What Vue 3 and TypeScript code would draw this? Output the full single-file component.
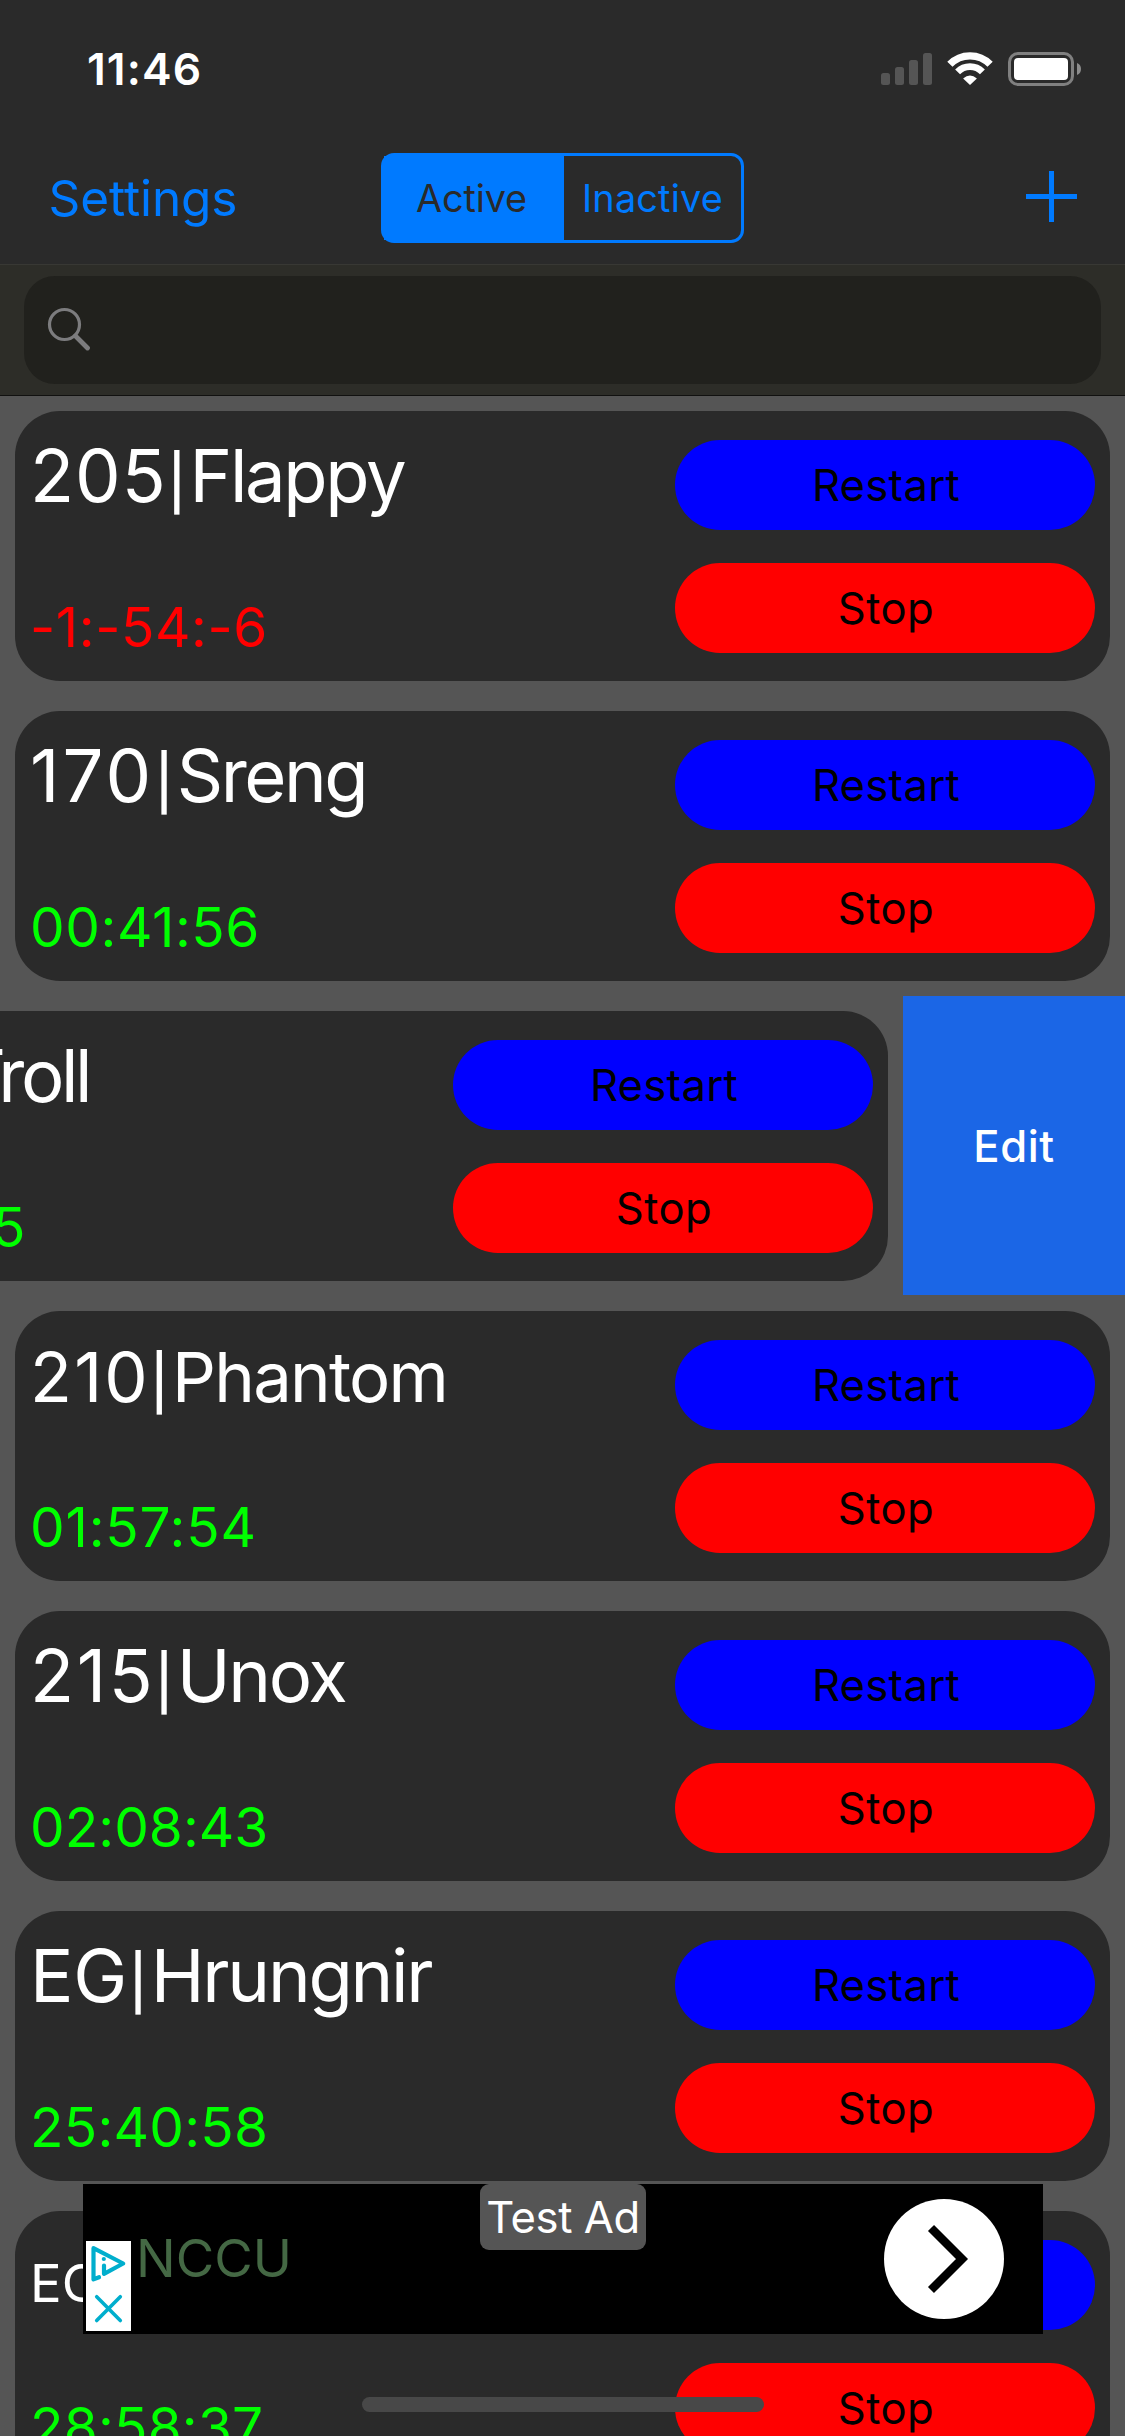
<script setup lang="ts">
interface Timer {
  code: string
  codeWidth: number
  codeSpacing: number
  name: string
  nameSpacing: number
  nameSize: number
  time: string
  timeSpacing: number
  timeIndent?: number
  expired?: boolean
  swiped?: boolean
}

const timers: Timer[] = [
  { code: '205', codeWidth: 137.5, codeSpacing: 0.94, name: 'Flappy', nameSpacing: -2.35, nameSize: 72.4, time: '-1:-54:-6', timeSpacing: 0.55, expired: true },
  { code: '170', codeWidth: 124.8, codeSpacing: 3.1, name: 'Sreng', nameSpacing: -2.5, nameSize: 72.4, time: '00:41:56', timeSpacing: 0.57 },
  { code: '', codeWidth: 129, codeSpacing: 0, name: 'Troll', nameSpacing: -3.4, nameSize: 72.4, time: '5', timeSpacing: 0, timeIndent: 184, swiped: true },
  { code: '210', codeWidth: 120, codeSpacing: 2.2, name: 'Phantom', nameSpacing: -1.74, nameSize: 68.8, time: '01:57:54', timeSpacing: 0.79 },
  { code: '215', codeWidth: 124.8, codeSpacing: 2.6, name: 'Unox', nameSpacing: -2.3, nameSize: 72.4, time: '02:08:43', timeSpacing: 0.02 },
  { code: 'EG', codeWidth: 98.8, codeSpacing: -0.24, name: 'Hrungnir', nameSpacing: -2.25, nameSize: 72.4, time: '25:40:58', timeSpacing: 0.24 },
  { code: 'EG', codeWidth: 72, codeSpacing: 0, name: '', nameSpacing: 0, nameSize: 52.7, time: '28:58:37', timeSpacing: 0.2 },
]
</script>

<template>
  <div class="screen">
    <header class="top">
      <div class="status">
        <span class="clock">11:46</span>
        <div class="status-icons">
          <svg class="signal" width="51" height="33" viewBox="0 0 51 33" fill="#555555">
            <rect x="0" y="21" width="9" height="12" rx="2.5" />
            <rect x="14" y="15" width="9" height="18" rx="2.5" />
            <rect x="28" y="8" width="9" height="25" rx="2.5" />
            <rect x="42" y="1" width="9" height="32" rx="2.5" />
          </svg>
          <svg class="wifi" width="46" height="34" viewBox="0 0 46 34" fill="none" stroke="#fff">
            <path d="M2.9 12.3A28 28 0 0 1 43.1 12.3" stroke-width="7.3" />
            <path d="M10.6 19.9A17.2 17.2 0 0 1 35.4 19.9" stroke-width="6.8" />
            <path d="M23 33L16.1 26.4Q23 20.4 29.9 26.4Z" fill="#fff" stroke="none" />
          </svg>
          <svg class="battery" width="73" height="34" viewBox="0 0 73 34">
            <rect x="1.5" y="1.5" width="63" height="31" rx="8.5" fill="none" stroke="#808080" stroke-width="3" />
            <rect x="6" y="6" width="54" height="22" rx="4" fill="#fff" />
            <path d="M69 11Q73 12.5 73 17T69 23Z" fill="#8c8c8c" />
          </svg>
        </div>
      </div>
      <nav class="nav">
        <span class="settings">Settings</span>
        <div class="segments">
          <span class="segment active">Active</span>
          <span class="segment">Inactive</span>
        </div>
        <svg class="add" width="51" height="51" viewBox="0 0 51 51" fill="#007aff">
          <rect x="23" y="0" width="5" height="51" />
          <rect x="0" y="23" width="51" height="5" />
        </svg>
      </nav>
      <div class="search">
        <div class="field">
          <svg width="44" height="44" viewBox="0 0 44 44" fill="none" stroke="#7c7c7e" stroke-linecap="round">
            <circle cx="17.5" cy="17.5" r="15" stroke-width="3.2" />
            <path d="M28.5 29L40.5 41" stroke-width="4.8" />
          </svg>
        </div>
      </div>
    </header>

    <main class="list">
      <div v-for="(t, i) in timers" :key="i" class="row" :class="{ swiped: t.swiped }">
        <section class="card">
          <div class="info">
            <div class="title">
              <span class="code" :style="{ width: t.codeWidth + 'px', fontSize: t.nameSize + 'px', letterSpacing: t.codeSpacing + 'px' }">{{ t.code }}</span>
              <span class="bar"><template v-if="t.code && t.name">|</template></span>
              <span class="name" :style="{ fontSize: t.nameSize + 'px', letterSpacing: t.nameSpacing + 'px' }">{{ t.name }}</span>
            </div>
            <div class="time" :class="{ expired: t.expired }" :style="{ textIndent: (t.timeIndent ?? 0) + 'px', letterSpacing: t.timeSpacing + 'px' }">{{ t.time }}</div>
          </div>
          <div class="actions">
            <div class="pill restart">Restart</div>
            <div class="pill stop">Stop</div>
          </div>
        </section>
        <div v-if="t.swiped" class="edit">Edit</div>
      </div>
    </main>

    <aside class="ad">
      <div class="choices">
        <svg width="45" height="90" viewBox="0 0 45 90" fill="none" stroke="#00aecd" stroke-linecap="round" stroke-linejoin="round">
          <path d="M13 36.2L7.5 38.4V7.2L37.2 22.5L18 32.8V24.5" stroke-width="4.2" />
          <circle cx="17.8" cy="18" r="2.1" fill="#00aecd" stroke="none" />
          <path d="M10.7 55.7L34.3 79.5M34.3 55.7L10.7 79.5" stroke-width="3.6" />
        </svg>
      </div>
      <span class="ad-title">NCCU</span>
      <span class="ad-label">Test Ad</span>
      <svg class="go" width="120" height="120" viewBox="0 0 120 120">
        <circle cx="60" cy="60" r="60" fill="#fff" />
        <path d="M47 29L78 60L47 91" fill="none" stroke="#000" stroke-width="8.5" />
      </svg>
    </aside>
    <div class="home"></div>
  </div>
</template>

<style>
body {
  background: #555555;
}
</style>

<style scoped>
.screen {
  position: relative;
  width: 1125px;
  height: 2436px;
  overflow: hidden;
  background: #555555;
  font-family: Inter, "Liberation Sans", sans-serif;
  white-space: nowrap;
}
.top {
  background: #2a2a2a;
}
.status {
  display: flex;
  justify-content: space-between;
  height: 132px;
  box-sizing: border-box;
  padding: 39px 44px 0 87px;
}
.clock {
  color: #fff;
  font-size: 44.4px;
  font-weight: 600;
  line-height: 60px;
  letter-spacing: 1.1px;
}
.status-icons {
  display: flex;
  align-items: flex-start;
  padding-top: 13px;
}
.wifi {
  margin: 0 15px 0 15px;
}
.nav {
  display: grid;
  grid-template-columns: 381px 363px 1fr;
  align-items: center;
  height: 132px;
  color: #007aff;
}
.settings {
  padding-left: 48.6px;
  font-size: 49.5px;
  line-height: 60px;
  letter-spacing: -0.1px;
}
.segments {
  display: flex;
  box-sizing: border-box;
  height: 90px;
  border: 3px solid #007aff;
  border-radius: 13px;
}
.segment {
  flex: 1;
  text-align: center;
  font-size: 37.8px;
  line-height: 84px;
  letter-spacing: 0.2px;
}
.segment.active {
  flex: none;
  box-sizing: border-box;
  width: 180px;
  padding-right: 5px;
  background: #007aff;
  color: #2a2a2a;
  letter-spacing: -0.1px;
}
.add {
  justify-self: end;
  margin: 0 48px 3px 0;
}
.search {
  box-sizing: border-box;
  height: 132px;
  padding: 11px 24px;
  background: #2d2d28;
  border-top: 1px solid #383834;
  border-bottom: 1px solid #111110;
}
.field {
  display: flex;
  align-items: center;
  box-sizing: border-box;
  height: 108px;
  padding: 0 0 2px 23px;
  border-radius: 31px;
  background: #21211d;
}
.row {
  display: flex;
  height: 300px;
}
.card {
  flex: none;
  display: flex;
  justify-content: space-between;
  box-sizing: border-box;
  width: 1095px;
  height: 270px;
  margin: 15px;
  padding: 0 15px 0 15px;
  border-radius: 45px;
  background: #2a2a2a;
}
.swiped .card {
  margin-left: -207px;
}
.title {
  display: flex;
  align-items: baseline;
  height: 129px;
  color: #fff;
}
/* Strut that keeps every title on one baseline, whatever its size */
.title::before {
  content: "";
  display: inline-block;
  height: 91px;
}
.title span {
  flex: none;
  line-height: 80px;
}
.title .bar {
  width: 22px;
  font-size: 54px;
  font-weight: 450;
}
.time {
  margin-top: 52px;
  color: #00ff00;
  font-size: 55px;
  line-height: 70px;
}
.time.expired {
  color: #ff0000;
}
.actions {
  display: flex;
  flex-direction: column;
  gap: 33px;
  padding-top: 29px;
}
.pill {
  box-sizing: border-box;
  width: 420px;
  height: 90px;
  padding-left: 2px;
  border-radius: 45px;
  color: #000;
  font-size: 43.6px;
  line-height: 92px;
  letter-spacing: 0.3px;
  text-align: center;
}
.restart {
  background: #0000ff;
}
.stop {
  background: #ff0000;
  letter-spacing: 0.5px;
}
.edit {
  flex: none;
  width: 222px;
  height: 299px;
  background: #1b66e6;
  color: #fff;
  font-size: 43.6px;
  font-weight: 500;
  line-height: 301px;
  letter-spacing: 0.56px;
  text-align: center;
}
.ad {
  position: absolute;
  left: 83px;
  top: 2184px;
  display: flex;
  align-items: center;
  box-sizing: border-box;
  width: 960px;
  height: 150px;
  padding: 0 39px 0 3px;
  background: #000;
}
.choices {
  align-self: flex-end;
  width: 45px;
  height: 90px;
  margin-bottom: 3px;
  background: #fff;
}
.choices svg {
  display: block;
}
.ad-title {
  margin: -2px auto 0 5px;
  color: #446844;
  font-size: 52.7px;
  letter-spacing: 0;
}
.ad-label {
  position: absolute;
  left: 397px;
  top: 0;
  width: 166px;
  height: 66px;
  border-radius: 9px;
  background: #555555;
  color: #fff;
  font-size: 43.6px;
  line-height: 68px;
  letter-spacing: -0.4px;
  text-align: center;
}
.home {
  position: absolute;
  left: 362px;
  top: 2397px;
  width: 402px;
  height: 15px;
  border-radius: 7.5px;
  background: #484848;
}
</style>
